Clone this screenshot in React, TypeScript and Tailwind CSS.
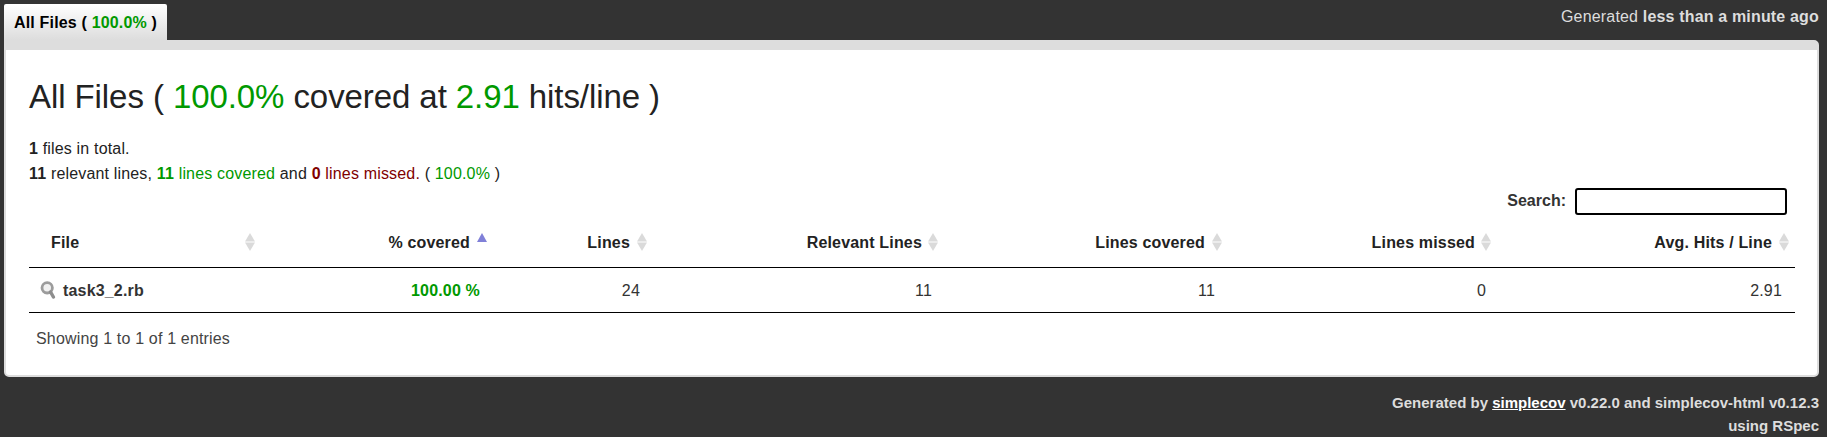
type HeadCell = { label: string; className: string };

const columns: HeadCell[] = [
  { label: "Lines", className: "gap-[7px] pr-[5px]" },
  { label: "Relevant Lines", className: "gap-[6px] pr-[6px]" },
  { label: "Lines covered", className: "gap-[7px] pr-[5px]" },
  { label: "Lines missed", className: "gap-[6px] pr-[5px]" },
  { label: "Avg. Hits / Line", className: "gap-[7px] pr-[6px]" },
];

const gridCols = "grid grid-cols-[231px_232px_160px_292px_283px_269px_299px]";

function SortBoth() {
  return (
    <svg className="mb-[2px]" width="10" height="18" viewBox="0 0 10 18" fill="#dadada">
      <path d="M5 0L10 8.4H0Z" />
      <path d="M0 9.6H10L5 18Z" />
    </svg>
  );
}

function SortAsc() {
  return (
    <svg className="mb-[2px]" width="10" height="18" viewBox="0 0 10 18" fill="#8080d8">
      <path d="M5 0L10 9H0Z" />
    </svg>
  );
}

function Magnifier() {
  return (
    <svg className="mb-[2px]" width="16" height="18" viewBox="0 0 16 18" fill="none">
      <circle cx="7.2" cy="6.8" r="5.2" stroke="#9c9c9c" strokeWidth="2.8" fill="#f1f1f1" />
      <path d="M10.6 11L13.4 16" stroke="#8e8e8e" strokeWidth="3.4" strokeLinecap="round" />
    </svg>
  );
}

export default function App() {
  return (
    <div className="h-[437px] overflow-hidden bg-[#333] px-1 pt-1 font-['Liberation_Sans',Arial,sans-serif] text-[16px] tracking-[0.17px] text-[#222]">
      <header className="flex h-9 items-start justify-between pr-1">
        <div className="h-9 rounded-t-[2px] bg-linear-to-b from-white to-[#ddd] px-[10px] pt-[7px] leading-[24px] font-bold text-black">
          All Files ( <span className="text-[#090]">100.0%</span> )
        </div>
        <div className="pt-px leading-[24px] text-[#ddd]">
          Generated <b>less than a minute ago</b>
        </div>
      </header>
      <main className="mr-1 h-[337px] rounded-[5px] rounded-tl-none border-2 border-t-[10px] border-[#ddd] bg-white pr-[22px] pl-[23px]">
        <h2 className="pt-[24px] text-[33px] leading-[46px] tracking-[-0.08px]">
          All Files ( <span className="text-[#090]">100.0%</span> covered at <span className="text-[#090]">2.91</span> hits/line )
        </h2>
        <div className="pt-[16px] leading-[25px]">
          <div>
            <b>1</b> files in total.
          </div>
          <div>
            <b>11</b> relevant lines,{" "}
            <span className="text-[#090]">
              <b>11</b> lines covered
            </span>{" "}
            and{" "}
            <span className="text-[#800000]">
              <b>0</b> lines missed.
            </span>{" "}
            ( <span className="text-[#090]">100.0%</span> )
          </div>
        </div>
        <div className="mt-[2px] flex h-[27px] items-center justify-end gap-[9px] pr-2 font-bold text-[#333]">
          <label htmlFor="search" className="pb-[2px] tracking-normal">
            Search:
          </label>
          <input
            id="search"
            className="h-[27px] w-[212px] rounded-[3px] border-2 border-black bg-white px-1 outline-none"
          />
        </div>
        <div className={`${gridCols} h-[53px] items-center border-b border-black pt-[3px] font-bold`}>
          <div className="flex items-center justify-between pr-[5px] pl-[22px]">
            File
            <SortBoth />
          </div>
          <div className="flex items-center justify-end gap-[7px] pr-[5px]">
            % covered
            <SortAsc />
          </div>
          {columns.map((c) => (
            <div key={c.label} className={`flex items-center justify-end ${c.className}`}>
              {c.label}
              <SortBoth />
            </div>
          ))}
        </div>
        <div className={`${gridCols} h-[45px] items-center border-b border-black pt-[2px] text-right text-[#333]`}>
          <div className="flex items-center gap-[7px] pl-[11px] font-bold">
            <Magnifier />
            task3_2.rb
          </div>
          <div className="pr-[12px] font-bold text-[#090]">100.00 %</div>
          <div className="pr-[12px]">24</div>
          <div className="pr-[12px]">11</div>
          <div className="pr-[12px]">11</div>
          <div className="pr-[10px]">0</div>
          <div className="pr-[13px]">2.91</div>
        </div>
        <div className="pt-[13px] pl-[7px] leading-[25px] text-[#444]">Showing 1 to 1 of 1 entries</div>
      </main>
      <footer className="pt-[14px] pr-1 text-right text-[15px] leading-[23px] font-bold tracking-normal text-[#ddd]">
        <div>
          Generated by <a className="text-white underline">simplecov</a> v0.22.0 and simplecov-html v0.12.3
        </div>
        <div>using RSpec</div>
      </footer>
    </div>
  );
}
